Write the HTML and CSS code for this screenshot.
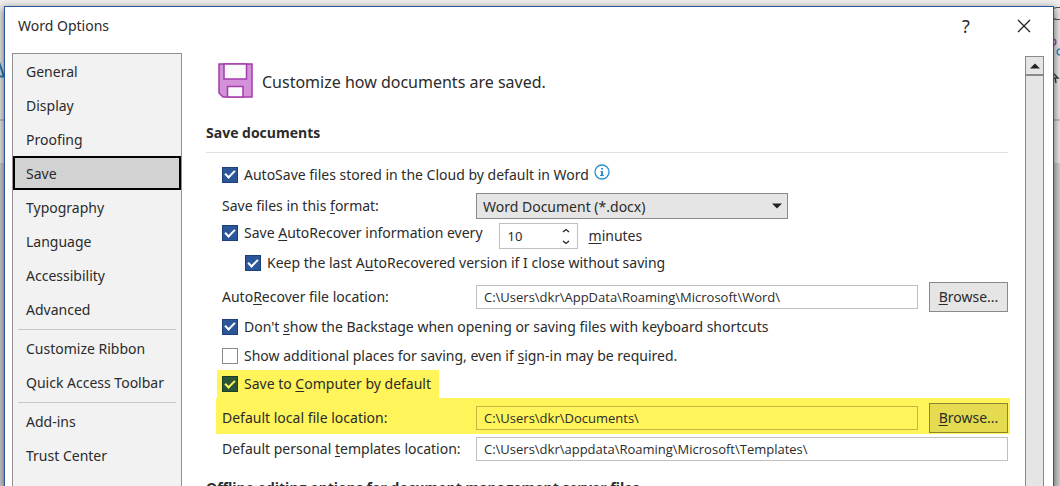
FILE: index.html
```html
<!DOCTYPE html>
<html lang="en">
<head>
<meta charset="utf-8">
<title>Word Options</title>
<link rel="stylesheet" href="styles.css">
</head>
<body>
<div class="backdrop" aria-hidden="true">
  <svg class="peek-left" width="4" height="30" viewBox="0 0 4 30"><path d="M-3 2 4 22.500H-3" fill="#d8e6f0" stroke="#2a7fba" stroke-width="2"/></svg>
  <svg class="peek-right" width="8" height="90" viewBox="0 0 8 90" fill="none">
    <path d="M8 7.500H5A5 5 0 0 0 5 19.500H8" stroke="#555" stroke-width="1.200"/>
    <path d="M1 39A2.800 3 0 1 1 1 45" stroke="#a14fae" stroke-width="1.500"/>
    <path d="M8 49A2.800 3 0 0 0 8 55" stroke="#3a93cf" stroke-width="1.500"/>
    <path d="M1 73 6 78H3L4 83M1 83V81" stroke="#444" stroke-width="1.500"/>
  </svg>
</div>
<main class="dialog">
  <header class="titlebar">
    <h1 class="title">Word Options</h1>
    <button class="caption-button help" type="button" aria-label="Help">?</button>
    <button class="caption-button" type="button" aria-label="Close">
      <svg width="14" height="14" viewBox="0 0 14 14"><path d="M1 1 13 13M13 1 1 13" stroke="#222" stroke-width="1.300"/></svg>
    </button>
  </header>
  <div class="content">
    <nav class="sidebar">
      <button class="nav-item" type="button">General</button>
      <button class="nav-item" type="button">Display</button>
      <button class="nav-item" type="button">Proofing</button>
      <button class="nav-item selected" type="button" aria-current="page">Save</button>
      <button class="nav-item" type="button">Typography</button>
      <button class="nav-item" type="button">Language</button>
      <button class="nav-item" type="button">Accessibility</button>
      <button class="nav-item" type="button">Advanced</button>
      <hr class="nav-separator">
      <button class="nav-item" type="button">Customize Ribbon</button>
      <button class="nav-item" type="button">Quick Access Toolbar</button>
      <hr class="nav-separator">
      <button class="nav-item" type="button">Add-ins</button>
      <button class="nav-item" type="button">Trust Center</button>
    </nav>
    <div class="page">
      <div class="page-header">
        <svg width="36" height="36" viewBox="0 0 36 36">
          <path d="M1 1H34V34H5L1 30Z" fill="#d490d8" stroke="#a23caa" stroke-width="1.500"/>
          <path d="M6 1H28.500V16H6Z" fill="#fafafa" stroke="#a23caa" stroke-width="1.500"/>
          <path d="M9.500 34V23.500H25V34Z" fill="#fafafa" stroke="#a23caa" stroke-width="1.500"/>
        </svg>
        <p class="lead">Customize how documents are saved.</p>
      </div>
      <h2 class="section-title ruled">Save documents</h2>
      <div class="options">
        <div class="row">
          <label class="check"><input type="checkbox" checked><span>AutoSave files stored in the Cloud by default in Word</span></label>
          <svg class="info" width="16" height="16" viewBox="0 0 16 16"><circle cx="8" cy="8" r="7" fill="none" stroke="#2b8fd0" stroke-width="1.300"/><path d="M7 4H9V5.500H7ZM6.500 7H9V11H10V12H6V11H7V8H6.500Z" fill="#2b8fd0"/></svg>
        </div>
        <div class="row format">
          <label class="field-label" for="format">Save files in this <u>f</u>ormat:</label>
          <div class="select-box">
            <select id="format"><option>Word Document (*.docx)</option></select>
            <svg class="arrow" width="10" height="6" viewBox="0 0 10 6"><path d="M0 0.500H10L5 5.500Z" fill="#222"/></svg>
          </div>
        </div>
        <div class="row recover">
          <label class="check"><input type="checkbox" checked><span>Save <u>A</u>utoRecover information every</span></label>
          <div class="spinner">
            <input id="minutes" type="number" value="10">
            <div class="spin-buttons">
              <button type="button" aria-label="Increase"><svg width="8" height="5" viewBox="0 0 8 5"><path d="M1 4 4 1.500 7 4" fill="none" stroke="#222" stroke-width="1.300"/></svg></button>
              <button type="button" aria-label="Decrease"><svg width="8" height="5" viewBox="0 0 8 5"><path d="M1 1 4 3.500 7 1" fill="none" stroke="#222" stroke-width="1.300"/></svg></button>
            </div>
          </div>
          <label for="minutes"><u>m</u>inutes</label>
        </div>
        <div class="row nested">
          <label class="check"><input type="checkbox" checked><span>Keep the last A<u>u</u>toRecovered version if I close without saving</span></label>
        </div>
        <div class="row location">
          <label class="field-label" for="recover-path">Auto<u>R</u>ecover file location:</label>
          <input class="path" id="recover-path" type="text" value="C:\Users\dkr\AppData\Roaming\Microsoft\Word\">
          <button class="browse" type="button"><u>B</u>rowse...</button>
        </div>
        <div class="row">
          <label class="check"><input type="checkbox" checked><span>Don't <u>s</u>how the Backstage when opening or saving files with keyboard shortcuts</span></label>
        </div>
        <div class="row">
          <label class="check"><input type="checkbox"><span>Show additional places for saving, even if <u>s</u>ign-in may be required.</span></label>
        </div>
        <div class="row marked fit">
          <label class="check"><input type="checkbox" checked><span>Save to <u>C</u>omputer by default</span></label>
        </div>
        <div class="row marked location">
          <label class="field-label" for="local-path">Default local f<u>i</u>le location:</label>
          <input class="path" id="local-path" type="text" value="C:\Users\dkr\Documents\">
          <button class="browse" type="button"><u>B</u>rowse...</button>
        </div>
        <div class="row">
          <label class="field-label" for="template-path">Default personal <u>t</u>emplates location:</label>
          <input class="path" id="template-path" type="text" value="C:\Users\dkr\appdata\Roaming\Microsoft\Templates\">
        </div>
      </div>
      <h2 class="section-title next">Offline editing options for document management server files</h2>
    </div>
    <div class="scrollbar">
      <button class="scroll-up" type="button" aria-label="Scroll up"><svg width="10" height="6" viewBox="0 0 10 6"><path d="M0 5.500H10L5 0.500Z" fill="#222"/></svg></button>
      <div class="thumb"></div>
    </div>
  </div>
</main>
</body>
</html>
```
FILE: styles.css
```css
* { box-sizing: border-box; }

body {
  margin: 0;
  height: 100vh;
  overflow: hidden;
  position: relative;
  display: flex;
  padding: 6px 6px 0 4px;
  color: #2b2b2b;
  font: 14px/20px "Noto Sans", "Open Sans", sans-serif;
}

button, input, select { margin: 0; font: inherit; color: inherit; border-radius: 0; }
button { padding: 0; border: 0; background: none; }
svg { display: block; flex: none; }
u { text-underline-offset: 2px; text-decoration-thickness: 1px; text-decoration-skip-ink: none; }

.backdrop {
  position: absolute;
  inset: 0;
  background: linear-gradient(#f0efee 0 119px, #c8c8c8 119px 121px, #f0efee 121px 163px, #d4d4d4 163px);
}
.peek-left { position: absolute; left: 0; top: 54px; }
.peek-right { position: absolute; right: 0; top: 0; }

.dialog {
  position: relative;
  flex: 1;
  min-width: 0;
  display: flex;
  flex-direction: column;
  background: #fff;
  border: 1px solid #2b579a;
  border-bottom: 0;
  box-shadow: 0 3px 8px 1px rgba(0, 0, 0, 0.55);
}

.titlebar {
  flex: none;
  display: flex;
  align-items: center;
  height: 46px;
  padding: 0 16px 8px 13px;
}
.title { flex: 1; margin: 0; font-size: 14px; font-weight: 400; }
.caption-button { display: flex; align-items: center; justify-content: center; width: 26px; height: 26px; margin-left: 32px; }
.help { font-size: 18px; }

.content { flex: 1; min-height: 0; display: flex; padding: 0 9px 0 7px; }

.sidebar {
  flex: none;
  width: 170px;
  display: flex;
  flex-direction: column;
  background: #f2f2f2;
  border: 1px solid #919191;
  border-bottom: 0;
}
.nav-item { flex: none; height: 34px; padding: 2px 13px 0; text-align: left; white-space: nowrap; }
.selected { padding: 2px 11px 0; background: #d2d2d2; border: 2px solid #000; }
.nav-separator { flex: none; width: 158px; margin: 3px 5px 1px; border: 0; border-top: 1px solid #c8c8c8; }

.page { flex: 1; min-width: 0; padding: 10px 17px 0 24px; }
.page-header { display: flex; align-items: center; gap: 8px; padding-left: 12px; }
.lead { margin: 0; padding-top: 2px; font-size: 16px; line-height: 34px; }
.section-title { margin: 0; font-family: "Open Sans", "Noto Sans", sans-serif; font-size: 14px; line-height: 20px; font-weight: 700; white-space: nowrap; }
.ruled { margin-top: 24px; padding-bottom: 9px; border-bottom: 1px solid #e1e1e1; }
.next { margin-top: 15px; }

.options { padding: 7px 0 0 16px; }
.row { display: flex; align-items: center; height: 29px; white-space: nowrap; }
.check { display: flex; align-items: center; gap: 6px; }
.check input {
  appearance: none;
  display: grid;
  place-items: center;
  flex: none;
  width: 16px;
  height: 16px;
  border: 1px solid #8a8a8a;
  background: #fff;
}
.check input:checked { background: #2b579a; border-color: #1b3f78; }
.check input:checked::before {
  content: "";
  width: 8px;
  height: 4px;
  margin-bottom: 3px;
  border: solid #fff;
  border-width: 0 0 2px 2px;
  transform: rotate(-45deg);
}
.info { margin: 0 0 6px 5px; }
.field-label { flex: none; width: 254px; }

.format { height: 34px; }
.select-box { position: relative; width: 312px; }
.select-box select {
  appearance: none;
  display: block;
  width: 100%;
  height: 26px;
  padding: 1px 24px 0 6px;
  border: 1px solid #8a8a8a;
  background: #e5e5e5;
}
.arrow { position: absolute; right: 6px; top: 10px; pointer-events: none; }

.recover { height: 26px; }
.recover .check { height: 20px; align-self: flex-start; }
.spinner { display: flex; width: 79px; height: 26px; margin: 0 11px 0 16px; border: 1px solid #c0c0c0; }
.spinner input {
  appearance: textfield;
  flex: 1;
  min-width: 0;
  padding: 0 0 0 8px;
  border: 0;
  background: none;
  font-size: 13px;
}
.spinner input::-webkit-inner-spin-button { appearance: none; }
.spin-buttons { display: grid; width: 21px; }
.spin-buttons button { display: grid; place-items: center; }

.nested { height: 28px; padding-left: 23px; }
.location { height: 35px; padding-top: 5px; }
.path {
  flex: 1;
  min-width: 0;
  height: 24px;
  padding: 0 7px;
  border: 1px solid #c0c0c0;
  background: #fff;
  font-family: "Open Sans", "Noto Sans", sans-serif;
  font-size: 13px;
}
.browse { flex: none; width: 79px; height: 30px; margin-left: 11px; border: 1px solid #8a8a8a; background: #e5e5e5; }

.marked { background: #fff45a; }
.fit { width: fit-content; height: 28px; margin-left: -5px; padding: 0 8px 0 5px; }
.marked .check input:checked { background: #2b5336; border-color: #1b3c2a; }
.marked .check input:checked::before { border-color: #fff45a; }
.marked.location { height: 36px; margin: 0 -2px 0 -6px; padding: 5px 2px 1px 6px; }
.marked .path { background: none; border-color: #c0b744; }
.marked .browse { background: #e5db50; border-color: #8a8431; }

.scrollbar {
  flex: none;
  width: 19px;
  margin-top: 3px;
  display: flex;
  flex-direction: column;
  background: #e5e5e5;
}
.scroll-up { display: grid; place-items: center; height: 19px; border: 1px solid #8a8a8a; }
.thumb { flex: 1; border: 1px solid #8a8a8a; border-bottom: 0; }
```
